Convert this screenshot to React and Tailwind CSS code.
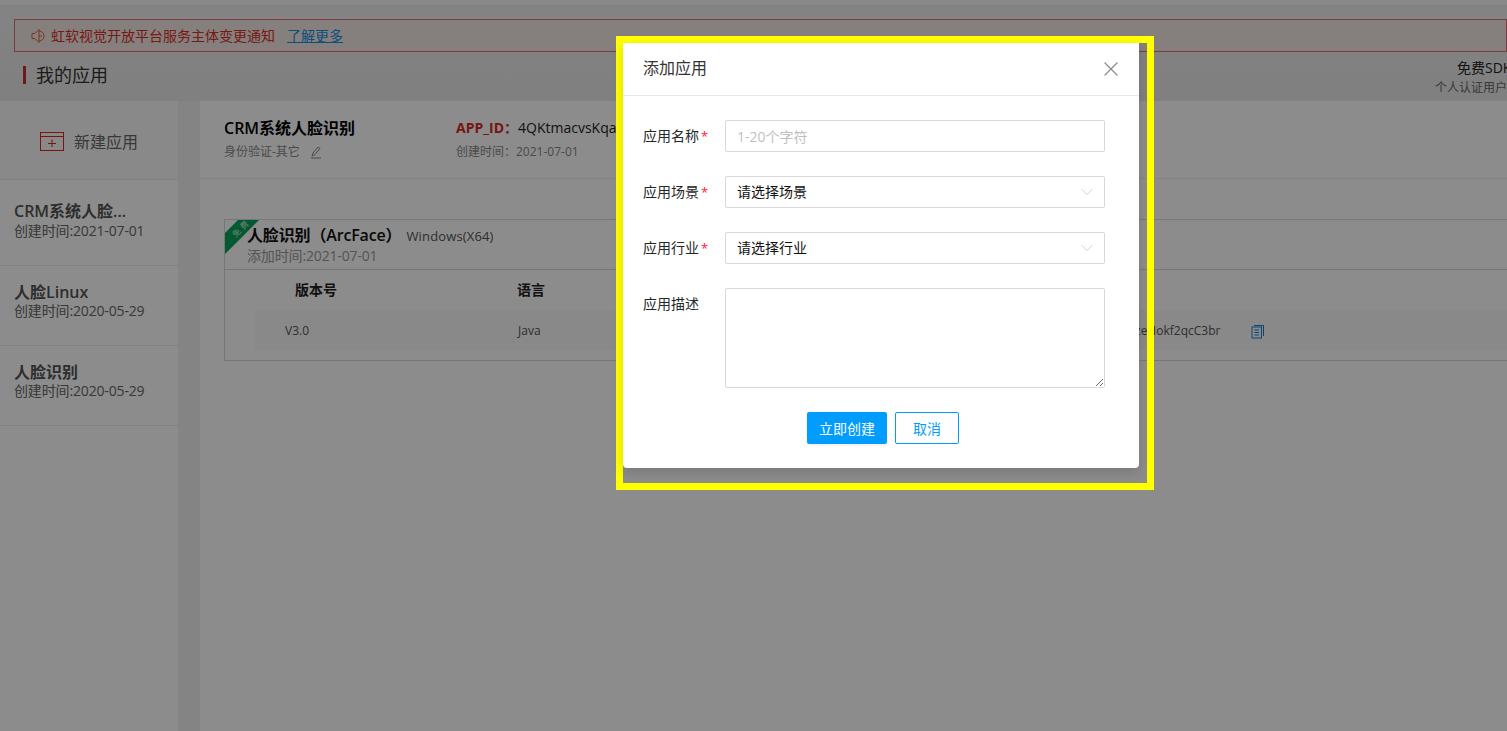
import React from "react";
import { X, ChevronDown } from "lucide-react";

const FONT = { fontFamily: '"Open Sans","Noto Sans CJK SC",sans-serif' };

function SideItem({ title, date, first }) {
  return (
    <div className={"border-b border-[#e9e9e9] pl-[14px] " + (first ? "h-[86px] pt-[21px]" : "h-[80px] pt-[16px]")}>
      <div className="text-[16px] leading-[20px] font-semibold text-[#555]">{title}</div>
      <div className={"text-[14px] leading-[18px] tracking-[-0.15px] text-[#666] " + (first ? "mt-[1px]" : "")}>{date}</div>
    </div>
  );
}

function Field({ label, required, children, top }) {
  return (
    <div className={"flex " + (top ? "items-start" : "items-center")}>
      <div className={"w-[82px] text-[14px] leading-[20px] text-[#262626] " + (top ? "pt-[6px]" : "")}>
        {label}
        {required && <span className="ml-[2px] text-[13px] text-[#ff1a2e]">*</span>}
      </div>
      {children}
    </div>
  );
}

function Select({ text }) {
  return (
    <div className="flex h-[32px] w-[380px] items-center justify-between rounded-[2px] border border-[#d9d9d9] pl-[11px] pr-[7px]">
      <span className="-translate-y-[1px] text-[14px] text-[#111]">{text}</span>
      <ChevronDown size={20} strokeWidth={1} className="text-[#c8c8c8]" />
    </div>
  );
}

function Modal() {
  return (
    <div className="absolute left-[616px] top-[36px] h-[454px] w-[538px] border-[7px] border-[#ffff00]">
      <div className="h-[425px] w-[516px] rounded-b-[4px] bg-white shadow-[0_4px_12px_rgba(0,0,0,0.15)]">
        <div className="flex h-[53px] items-center justify-between border-b border-[#e8e8e8] pl-[20px] pr-[16px]">
          <span className="-translate-y-[1px] text-[16px] text-[#333]">添加应用</span>
          <X size={24} strokeWidth={1.3} className="text-[#8c8c8c]" />
        </div>
        <div className="flex flex-col gap-[24px] pl-[20px] pt-[24px]">
          <Field label="应用名称" required>
            <div className="flex h-[32px] w-[380px] items-center rounded-[2px] border border-[#d9d9d9] pl-[11px] text-[14px] text-[#bfbfbf]">
              1-20个字符
            </div>
          </Field>
          <Field label="应用场景" required>
            <Select text="请选择场景" />
          </Field>
          <Field label="应用行业" required>
            <Select text="请选择行业" />
          </Field>
          <Field label="应用描述" top>
            <textarea className="block h-[100px] w-[380px] rounded-[2px] border border-[#d9d9d9] outline-none" />
          </Field>
        </div>
        <div className="mt-[24px] flex justify-center gap-[8px] pl-[4px]">
          <div className="flex h-[32px] w-[80px] items-center justify-center rounded-[2px] bg-[#009dff] text-[14px] text-white shadow-[0_2px_2px_rgba(0,0,0,0.05)]">
            立即创建
          </div>
          <div className="flex h-[32px] w-[64px] items-center justify-center rounded-[2px] border border-[#009dff] text-[14px] text-[#009dff]">
            取消
          </div>
        </div>
      </div>
    </div>
  );
}

export default function App() {
  return (
    <div style={FONT} className="relative h-[731px] w-full overflow-hidden bg-[#f0f0f0]">
      <div className="h-[5px] bg-[#fafafa]" />
      <div className="h-[96px] border-t border-[#eaeaea] bg-gradient-to-b from-[#efefef] to-[#e9e9e9] pl-[14px] pt-[13px]">
        <div className="flex h-[33px] items-center border border-[#e0707a] bg-[#f3e8e4] pl-[16px] text-[14px] text-[#d93026]">
          <svg width="16" height="16" viewBox="0 0 16 16" fill="none" stroke="#e0602f" strokeWidth="1" className="mr-[4px]">
            <path d="M1 5.5h3l4-4v13l-4-4H1z" />
            <path d="M8 3a5 5 0 0 1 0 10M8 8h3" />
          </svg>
          <span>虹软视觉开放平台服务主体变更通知</span>
          <span className="ml-[12px] text-[#1a8fe3] underline">了解更多</span>
        </div>
        <div className="mt-[14px] flex items-start justify-between">
          <div className="ml-[9px] flex h-[18px] items-center border-l-[3px] border-[#c9302c] pl-[10px] text-[18px] text-[#333]">
            我的应用
          </div>
          <div className="-mt-[7px] w-[72px] overflow-hidden text-[14px] whitespace-nowrap">
            <div className="mb-[2px] pl-[22px] leading-[18px] text-[#222]">免费SDK</div>
            <div className="text-[12px] leading-[18px] text-[#666]">个人认证用户</div>
          </div>
        </div>
      </div>

      <div className="flex h-[630px]">
        <div className="w-[178px] shrink-0 bg-white">
          <div className="flex h-[79px] items-center justify-center gap-[10px] border-b border-[#e9e9e9] bg-[#fafafa] pt-[3px]">
            <svg width="24" height="20" viewBox="0 0 24 20" fill="none" stroke="#d9281e">
              <rect x="0.5" y="0.5" width="23" height="18" />
              <path d="M0.5 4.5h23M12 7.5v7.5M8 11.5h8" />
            </svg>
            <span className="text-[16px] text-[#666]">新建应用</span>
          </div>
          <SideItem first title="CRM系统人脸..." date="创建时间:2021-07-01" />
          <SideItem title="人脸Linux" date="创建时间:2020-05-29" />
          <SideItem title="人脸识别" date="创建时间:2020-05-29" />
        </div>

        <div className="ml-[22px] min-w-0 flex-1 overflow-hidden bg-white">
          <div className="flex h-[78px] border-b border-[#efefef] pl-[24px] pt-[16px]">
            <div className="w-[232px]">
              <div className="text-[16px] leading-[22px] font-semibold text-black">CRM系统人脸识别</div>
              <div className="mt-[5px] flex items-center gap-[10px] text-[12px] leading-[16px] text-[#888]">
                身份验证-其它
                <svg width="12" height="13" viewBox="0 0 12 13" fill="none" stroke="#888">
                  <path d="M2 10l1-3 5-6 2 1.5-5 6zM1 12h10" />
                </svg>
              </div>
            </div>
            <div>
              <div className="text-[14px] leading-[22px] text-[#222]">
                <span className="font-bold text-[#d9281e]">APP_ID：</span>4QKtmacvsKqaC
              </div>
              <div className="mt-[5px] text-[12px] leading-[16px] text-[#888]">创建时间：2021-07-01</div>
            </div>
          </div>

          <div className="relative ml-[24px] mt-[40px] h-[142px] w-[1290px] border border-[#d9d9d9]">
            <div className="h-[50px] border-b border-[#d9d9d9] pl-[22px] pt-[4px]">
              <div className="flex items-baseline">
                <span className="text-[16px] leading-[22px] font-semibold tracking-[-0.15px] text-[#111]">人脸识别（ArcFace）</span>
                <span className="ml-[5px] text-[13px] tracking-[0.15px] text-[#555]">Windows(X64)</span>
              </div>
              <div className="text-[14px] leading-[18px] tracking-[-0.15px] text-[#999]">添加时间:2021-07-01</div>
            </div>
            <div className="absolute left-0 top-0 h-[34px] w-[34px] overflow-hidden">
              <div className="absolute -left-[15px] top-0 h-[15px] w-[62px] -rotate-45 bg-[#07a35a] text-center text-[8px] leading-[15px] tracking-[3px] text-white/80">
                免费
              </div>
            </div>
            <div className="flex h-[40px] items-center pb-[2px] pl-[70px] text-[14px] font-semibold text-[#222]">
              <span className="w-[222px]">版本号</span>
              <span>语言</span>
            </div>
            <div className="ml-[30px] flex h-[40px] items-center bg-[#fafafa] pl-[30px] pt-[2px] text-[12px] text-[#555]">
              <span className="w-[233px]">V3.0</span>
              <span className="w-[617px]">Java</span>
              <span>zeHokf2qcC3br</span>
              <svg width="14" height="15" viewBox="0 0 14 15" fill="none" stroke="#1b80d2" className="ml-[31px]">
                <path d="M3 1.5h9.5V12" />
                <rect x="1" y="3" width="9.5" height="11" />
                <path d="M3.5 6h4.5M3.5 8.5h4.5M3.5 11h4.5" />
              </svg>
            </div>
          </div>
        </div>
      </div>

      <div className="absolute inset-0 bg-black/45" />
      <Modal />
    </div>
  );
}
